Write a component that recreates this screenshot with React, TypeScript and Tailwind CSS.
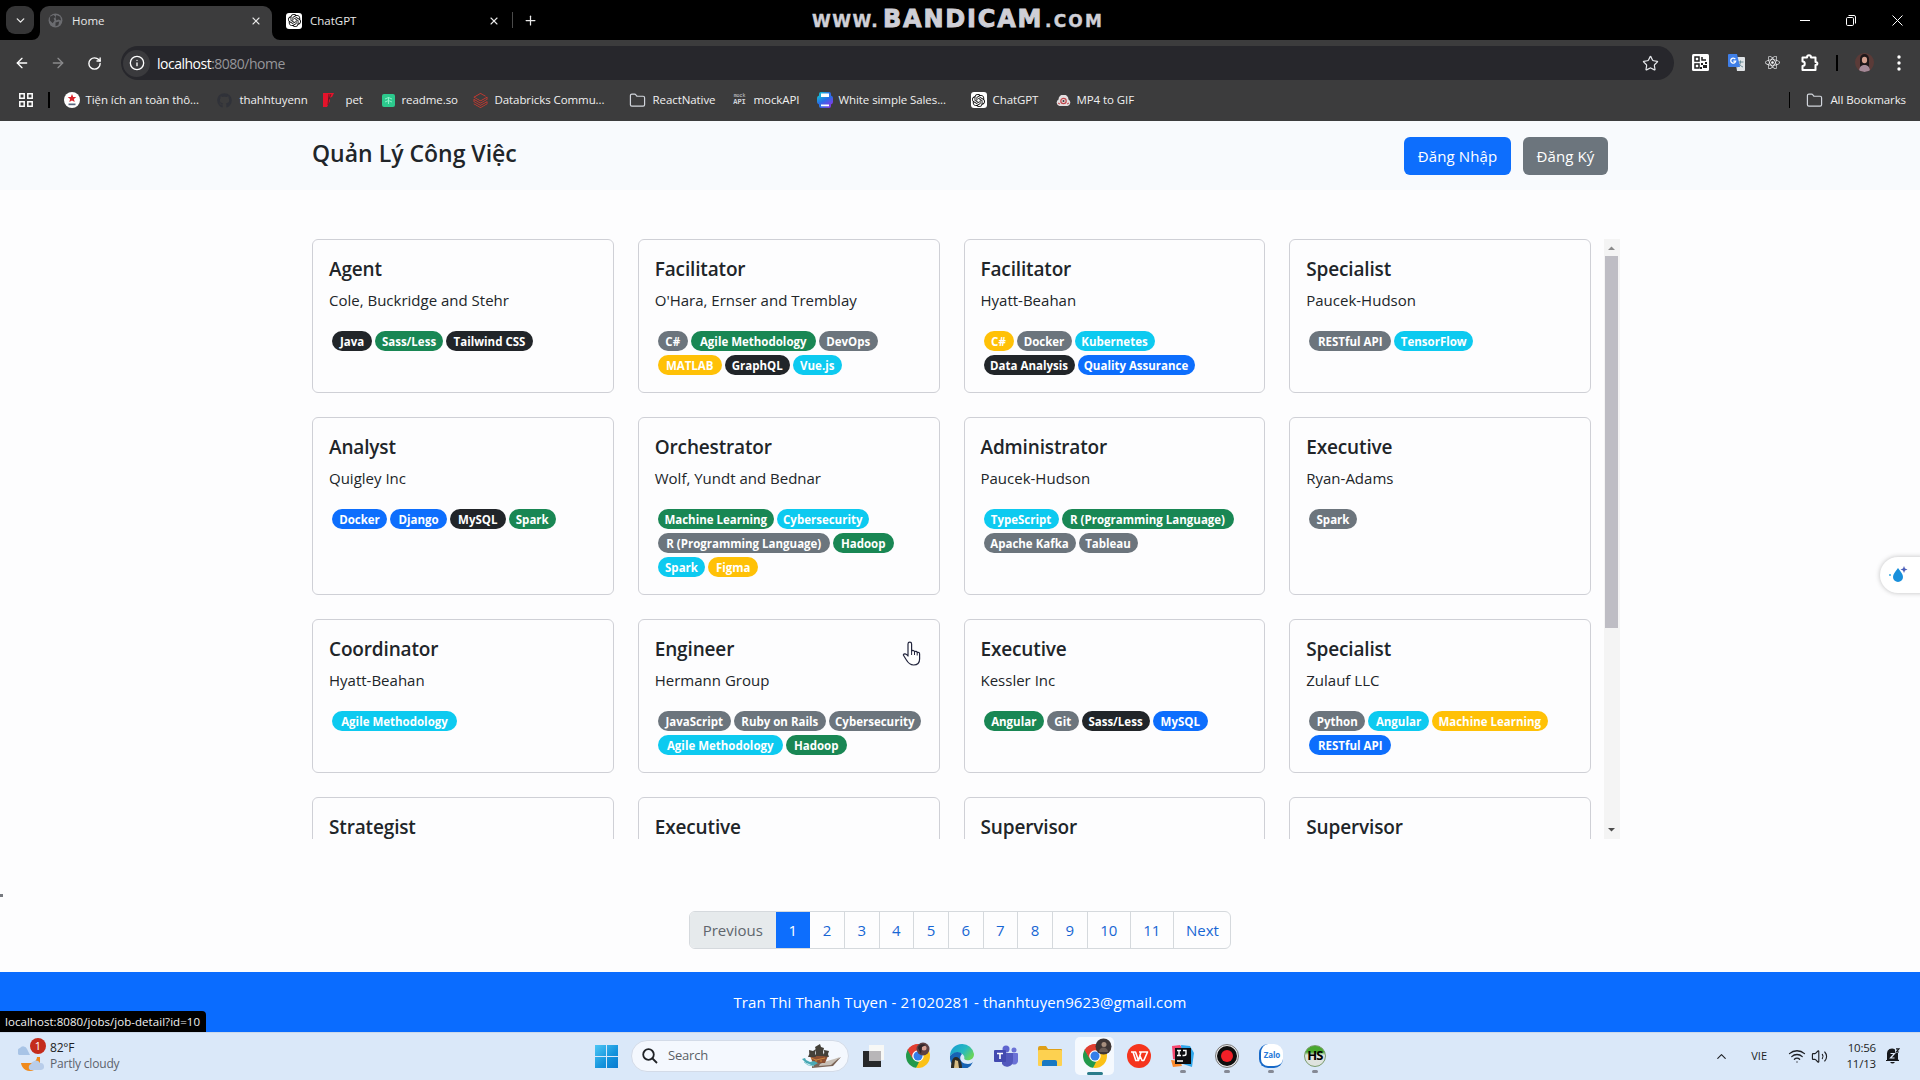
import type { ReactNode } from "react";
import { SiOpenai, SiDatabricks } from "react-icons/si";
import { FaGithub, FaReact } from "react-icons/fa";
import { ArrowLeft, ArrowRight, ChevronDown, ChevronUp, Folder, Info, RotateCw, Star, X, Plus, Wifi, Volume2 } from "lucide-react";

type Tone = "dark" | "green" | "gray" | "yellow" | "cyan" | "blue";
type Badge = [string, Tone];
type Job = { title: string; company: string; rows: Badge[][] };

const toneClass: Record<Tone, string> = {
  dark: "bg-[#212529]",
  green: "bg-[#198754]",
  gray: "bg-[#6c757d]",
  yellow: "bg-[#ffc107]",
  cyan: "bg-[#0dcaf0]",
  blue: "bg-[#0d6efd]",
};

const badgeWidth: Record<string, string> = {
  Java: "w-[40px]",
  "Sass/Less": "w-[68px]",
  "Tailwind CSS": "w-[87px]",
  "C#": "w-[30px]",
  "Agile Methodology": "w-[125px]",
  DevOps: "w-[59px]",
  MATLAB: "w-[64px]",
  GraphQL: "w-[65px]",
  "Vue.js": "w-[49px]",
  Docker: "w-[55px]",
  Kubernetes: "w-[80px]",
  "Data Analysis": "w-[91px]",
  "Quality Assurance": "w-[117px]",
  "RESTful API": "w-[82px]",
  TensorFlow: "w-[79px]",
  Django: "w-[57px]",
  MySQL: "w-[55.5px]",
  Spark: "w-[47.5px]",
  "Machine Learning": "w-[116px]",
  Cybersecurity: "w-[92px]",
  "R (Programming Language)": "w-[172px]",
  Hadoop: "w-[61px]",
  Figma: "w-[50px]",
  TypeScript: "w-[75px]",
  "Apache Kafka": "w-[92px]",
  Tableau: "w-[59px]",
  JavaScript: "w-[73px]",
  "Ruby on Rails": "w-[92px]",
  Angular: "w-[60.5px]",
  Git: "w-[31.5px]",
  Python: "w-[56px]",
};

const jobs: Job[] = [
  { title: "Agent", company: "Cole, Buckridge and Stehr", rows: [[["Java", "dark"], ["Sass/Less", "green"], ["Tailwind CSS", "dark"]]] },
  { title: "Facilitator", company: "O'Hara, Ernser and Tremblay", rows: [[["C#", "gray"], ["Agile Methodology", "green"], ["DevOps", "gray"]], [["MATLAB", "yellow"], ["GraphQL", "dark"], ["Vue.js", "cyan"]]] },
  { title: "Facilitator", company: "Hyatt-Beahan", rows: [[["C#", "yellow"], ["Docker", "gray"], ["Kubernetes", "cyan"]], [["Data Analysis", "dark"], ["Quality Assurance", "blue"]]] },
  { title: "Specialist", company: "Paucek-Hudson", rows: [[["RESTful API", "gray"], ["TensorFlow", "cyan"]]] },
  { title: "Analyst", company: "Quigley Inc", rows: [[["Docker", "blue"], ["Django", "blue"], ["MySQL", "dark"], ["Spark", "green"]]] },
  { title: "Orchestrator", company: "Wolf, Yundt and Bednar", rows: [[["Machine Learning", "green"], ["Cybersecurity", "cyan"]], [["R (Programming Language)", "gray"], ["Hadoop", "green"]], [["Spark", "cyan"], ["Figma", "yellow"]]] },
  { title: "Administrator", company: "Paucek-Hudson", rows: [[["TypeScript", "cyan"], ["R (Programming Language)", "green"]], [["Apache Kafka", "gray"], ["Tableau", "gray"]]] },
  { title: "Executive", company: "Ryan-Adams", rows: [[["Spark", "gray"]]] },
  { title: "Coordinator", company: "Hyatt-Beahan", rows: [[["Agile Methodology", "cyan"]]] },
  { title: "Engineer", company: "Hermann Group", rows: [[["JavaScript", "gray"], ["Ruby on Rails", "gray"], ["Cybersecurity", "gray"]], [["Agile Methodology", "cyan"], ["Hadoop", "green"]]] },
  { title: "Executive", company: "Kessler Inc", rows: [[["Angular", "green"], ["Git", "gray"], ["Sass/Less", "dark"], ["MySQL", "blue"]]] },
  { title: "Specialist", company: "Zulauf LLC", rows: [[["Python", "gray"], ["Angular", "cyan"], ["Machine Learning", "yellow"]], [["RESTful API", "blue"]]] },
  { title: "Strategist", company: "", rows: [] },
  { title: "Executive", company: "", rows: [] },
  { title: "Supervisor", company: "", rows: [] },
  { title: "Supervisor", company: "", rows: [] },
];

function Card({ job }: { job: Job }) {
  return (
    <article className="rounded-md border border-[#cfd0d6] px-4 pt-[17px] pb-[15px]">
      <h5 className="mb-[7px] text-[19px] font-semibold leading-6 tracking-[-0.15px]">{job.title}</h5>
      <p className="mb-4 h-6 text-[15px] leading-6 whitespace-nowrap">{job.company}</p>
      {job.rows.map((row, i) => (
        <div key={i} className="flex h-6 gap-[3px] pt-[3px] pl-[3px]">
          {row.map(([label, tone]) => (
            <span key={label} className={`flex h-5 shrink-0 items-center justify-center rounded-full pt-px text-[11.5px] font-bold whitespace-nowrap text-white ${badgeWidth[label]} ${toneClass[tone]}`}>
              {label}
            </span>
          ))}
        </div>
      ))}
    </article>
  );
}

function ChatIcon() {
  return (
    <span className="flex size-4 items-center justify-center rounded-[3px] bg-white text-black">
      <SiOpenai size={13} />
    </span>
  );
}

function Globe() {
  return (
    <svg width="15" height="15" viewBox="0 0 16 16">
      <circle cx="8" cy="8" r="7.4" fill="#6b6c70" />
      <path d="M2 4l4-2 2 2-2 2 1 2-2 3-3-3zM9 2l4 2 1 4-3-1-2 1-1-3zM8 10l4-1-1 4-3 1z" fill="#3a3a3c" />
    </svg>
  );
}

function VnIcon() {
  return (
    <svg width="16" height="16" viewBox="0 0 16 16">
      <circle cx="8" cy="8" r="8" fill="#fff" />
      <path d="M8 2l1.2 2.9 3.1.2-2.4 2 .8 3L8 8.500l-2.700 1.600.8-3-2.400-2 3.100-.2z" fill="#d8232a" />
      <path d="M4.500 11.500h7v1.700h-7z" fill="#56647c" />
    </svg>
  );
}

function PetIcon() {
  return (
    <svg width="11" height="14" viewBox="0 0 11 14">
      <path d="M0 0h11L9 4 6 5l1 3-3 6H0z" fill="#e5132b" />
      <path d="M6 1L5 12M8 1L6 6" stroke="#5a1a22" strokeWidth=".9" />
    </svg>
  );
}

function MockIcon() {
  return (
    <span className="flex w-3 flex-col items-center font-['Liberation_Mono'] text-[5px] leading-[5px] text-gray-300">
      <span>mock</span>
      <span className="text-[7px] font-bold leading-[7px]">API</span>
    </span>
  );
}

function SalesIcon() {
  return (
    <svg width="16" height="16" viewBox="0 0 16 16">
      <defs>
        <linearGradient id="sales" x1="0" y1="0" x2="1" y2="1">
          <stop offset="0" stopColor="#12c4d3" />
          <stop offset=".5" stopColor="#2a6de8" />
          <stop offset="1" stopColor="#8a35e6" />
        </linearGradient>
      </defs>
      <rect x="2" width="12" height="16" rx="2" fill="url(#sales)" />
      <rect y="3.500" width="16" height="9" rx="3" fill="url(#sales)" />
      <path d="M4 1.500h8V5H4zM4 12.500h8v1.800H4z" fill="#fff" />
    </svg>
  );
}

function GifIcon() {
  return (
    <svg width="15" height="11" viewBox="0 0 15 11">
      <path d="M3.500 11A3.500 3.500 0 0 1 2.500 4.500 5 5 0 0 1 12.500 4.500 3.500 3.500 0 0 1 11.500 11z" fill="#e3dedf" />
      <circle cx="7.500" cy="6" r="2.700" fill="none" stroke="#c0454b" strokeWidth="1.200" />
      <circle cx="7.500" cy="6" r="1" fill="#333" />
      <path d="M2 8l2 1M13 8l-2 1" stroke="#c0454b" />
    </svg>
  );
}

const bookmarks: { label: string; w: string; gap: string; icon: ReactNode }[] = [
  { label: "Tiện ích an toàn thô...", w: "w-[153px]", gap: "w-[22px]", icon: <VnIcon /> },
  { label: "thahhtuyenn", w: "w-[106px]", gap: "w-[23px]", icon: <FaGithub size={15} className="text-[#303239]" /> },
  { label: "pet", w: "w-[59px]", gap: "w-[23px]", icon: <PetIcon /> },
  {
    label: "readme.so", w: "w-[91px]", gap: "w-[20px]",
    icon: (
      <svg width="13" height="13" viewBox="0 0 13 13">
        <rect width="13" height="13" rx="2" fill="#2cc98d" />
        <path d="M3 5l3.500-1.500L10 5M3 8l3.500-1.500L10 8M6.500 3v7" stroke="#8df0c9" fill="none" />
      </svg>
    ),
  },
  { label: "Databricks Commu...", w: "w-[156px]", gap: "w-[22px]", icon: <SiDatabricks size={15} className="text-[#e0392e]" /> },
  { label: "ReactNative", w: "w-[105px]", gap: "w-[24px]", icon: <Folder size={17} strokeWidth={1.7} className="text-gray-300" /> },
  { label: "mockAPI", w: "w-[83px]", gap: "w-[20px]", icon: <MockIcon /> },
  { label: "White simple Sales...", w: "w-[154px]", gap: "w-[22px]", icon: <SalesIcon /> },
  { label: "ChatGPT", w: "w-[85px]", gap: "w-[22px]", icon: <ChatIcon /> },
  { label: "MP4 to GIF", w: "w-[90px]", gap: "w-[21px]", icon: <GifIcon /> },
];

function TabStrip() {
  return (
    <div className="relative flex h-10 items-end bg-black text-[12px] text-[#e8e8e8]">
      <div className="mb-1.5 ml-1.5 flex h-7 w-7 items-center justify-center rounded-[9px] bg-[#353536]">
        <ChevronDown size={13} strokeWidth={2.5} />
      </div>
      <div className="relative ml-1.5 flex h-[34px] w-[232px] items-center rounded-t-[9px] bg-[#3c3c3d] pr-[10px] pb-[5px] pl-2">
        <svg className="absolute bottom-0 -left-2" width="8" height="8"><path d="M8 0v8H0a8 8 0 0 0 8-8z" fill="#3c3c3d" /></svg>
        <svg className="absolute bottom-0 -right-2" width="8" height="8"><path d="M0 0v8h8a8 8 0 0 1-8-8z" fill="#3c3c3d" /></svg>
        <Globe />
        <span className="ml-[9px] grow pt-px text-[11.500px]">Home</span>
        <X size={12} strokeWidth={2.2} />
      </div>
      <div className="flex h-[34px] w-[240px] items-center pb-[5px] pl-3.5">
        <ChatIcon />
        <span className="ml-2 grow pt-px text-[11.500px]">ChatGPT</span>
        <X size={12} strokeWidth={2.2} className="mr-3" />
      </div>
      <div className="mb-3 h-4 w-px bg-[#4a4a4a]" />
      <Plus size={15} strokeWidth={2} className="mb-3 ml-[10px]" />
      <div className="grow" />
      <div className="flex h-10 w-[138px] items-center">
        <span className="flex w-[46px] justify-center"><svg width="10" height="10"><path d="M0 5.500h10" stroke="#fff" /></svg></span>
        <span className="flex w-[46px] justify-center">
          <svg width="10" height="11" fill="none" stroke="#fff"><rect x=".5" y="2.500" width="7" height="8" rx="1.200" /><path d="M2.500.5H8a1.500 1.500 0 0 1 1.500 1.500v6.500" /></svg>
        </span>
        <span className="flex w-[46px] justify-center"><svg width="11" height="11" stroke="#fff"><path d="M.5.5l10 10M10.500.5l-10 10" /></svg></span>
      </div>
      <div className="absolute top-0 left-[812px] flex h-[40px] items-baseline font-['DejaVu_Sans'] font-bold leading-[39px] text-[#cfcfd6]">
        <span className="w-[71px] text-[17px] tracking-[1.500px] [-webkit-text-stroke:0.4px_#cfcfd6]">WWW.</span>
        <span className="w-[162px] text-[24px] tracking-[1.800px] [-webkit-text-stroke:0.9px_#cfcfd6]">BANDICAM</span>
        <span className="text-[17px] tracking-[2.200px] [-webkit-text-stroke:0.4px_#cfcfd6]">.COM</span>
      </div>
    </div>
  );
}

function Toolbar() {
  return (
    <div className="flex h-[43px] items-center bg-[#3c3c3d] text-white">
      <div className="flex w-[121px] items-center pt-[3px] pl-[14px]">
        <ArrowLeft size={16} strokeWidth={2} />
        <ArrowRight size={16} strokeWidth={2} className="ml-[20px] text-[#8a8a8c]" />
        <RotateCw size={15} strokeWidth={2.2} className="ml-[21px]" />
      </div>
      <div className="mt-1.5 mb-[3px] flex h-[34px] w-[1553px] shrink-0 items-center rounded-full bg-[#27272c] pr-[15px] pl-[2px]">
        <span className="flex size-[27px] items-center justify-center rounded-full bg-[#3a3a3d]"><Info size={16} strokeWidth={2} /></span>
        <span className="ml-[7px] grow text-[14px] tracking-[-0.5px]">localhost<span className="text-[#96969a]">:8080/home</span></span>
        <Star size={17} strokeWidth={1.7} className="text-gray-200" />
      </div>
      <div className="flex grow items-center pt-0.5 pl-[17.500px]">
        <svg width="17" height="17" viewBox="0 0 17 17">
          <rect width="17" height="17" rx="1.500" fill="#fff" />
          <path d="M3 3h4v4H3zM10 3v3h4M3 10h4v4H3z" fill="none" stroke="#222" strokeWidth="1.500" />
          <path d="M9 9h2v2H9zM11 11h4v3h-4zM13 8h2v2h-2zM8 13h2v2H8z" fill="#222" />
        </svg>
        <svg className="ml-[19px]" width="17" height="17" viewBox="0 0 17 17">
          <path d="M7 3h9a1 1 0 0 1 1 1v12a1 1 0 0 1-1 1H9z" fill="#dfe3e6" />
          <path d="M9.500 8h6M12.500 6.500V8c0 2-1.500 4-3 5M11 9.500c1 2 2.500 3 4 3.500" stroke="#6b8c97" fill="none" />
          <path d="M1 0h8l3 13H1a1 1 0 0 1-1-1V1a1 1 0 0 1 1-1z" fill="#3f7fe8" />
          <path d="M7.300 5.200a2.500 2.500 0 1 0 .4 1.900H5.300" fill="none" stroke="#fff" strokeWidth="1.300" />
        </svg>
        <FaReact size={15} className="ml-[20px] text-gray-100" />
        <svg className="ml-[21px]" width="18" height="18" viewBox="0 0 18 18" fill="none" stroke="#fff" strokeWidth="2" strokeLinejoin="round">
          <path d="M1.500 3.500H6C6 .5 10 .5 10 3.500h4.500V8c2.500 0 2.500 3 0 3v5H1.500v-4c3 0 3-4.500 0-4.500z" />
        </svg>
        <span className="ml-[17px] h-4 w-0.5 bg-black" />
        <svg className="ml-[17px]" width="19" height="19" viewBox="0 0 19 19">
          <clipPath id="avatar"><circle cx="9.500" cy="9.500" r="9.500" /></clipPath>
          <g clipPath="url(#avatar)">
            <rect width="19" height="19" fill="#5b3b38" />
            <path d="M5 19V6a4.500 5 0 0 1 9 0v13z" fill="#1e1719" />
            <ellipse cx="9.500" cy="7" rx="2.600" ry="3.300" fill="#d3a08f" />
            <path d="M4 19c0-6 3-7 5.500-7s5.500 1 5.500 7z" fill="#a48997" />
          </g>
        </svg>
        <svg className="ml-[23px]" width="4" height="18" fill="#fff"><circle cx="2" cy="3" r="1.700" /><circle cx="2" cy="9" r="1.700" /><circle cx="2" cy="15" r="1.700" /></svg>
      </div>
    </div>
  );
}

function Bookmarks() {
  return (
    <div className="flex h-[38px] items-center bg-[#3c3c3d] pb-1 text-[11.500px] tracking-[-0.08px] text-[#f0f0f0]">
      <svg className="ml-[19px]" width="14" height="14" viewBox="0 0 14 14" fill="none" stroke="#fff" strokeWidth="1.500">
        <path d="M.8.8h4.400v4.400H.8zM8.800.8h4.400v4.400H8.800zM.8 8.800h4.400v4.400H.8zM8.800 8.800h4.400v4.400H8.800z" />
      </svg>
      <span className="mr-[14px] ml-[15px] h-4 w-[1.500px] bg-black" />
      {bookmarks.map((b) => (
        <div key={b.label} className={`flex shrink-0 items-center whitespace-nowrap ${b.w}`}>
          <span className={`flex shrink-0 ${b.gap}`}>{b.icon}</span>
          {b.label}
        </div>
      ))}
      <span className="grow" />
      <span className="mr-4 h-4 w-[1.500px] bg-black" />
      <Folder size={17} strokeWidth={1.7} className="text-gray-300" />
      <span className="mr-[14px] ml-[7px]">All Bookmarks</span>
    </div>
  );
}

const pages: [string, string][] = [
  ["2", "w-[35px]"], ["3", "w-[34.5px]"], ["4", "w-[34.5px]"], ["5", "w-[35px]"], ["6", "w-[34.5px]"],
  ["7", "w-[34.5px]"], ["8", "w-[35px]"], ["9", "w-[34.5px]"], ["10", "w-[43.5px]"], ["11", "w-[42.5px]"], ["Next", "w-[58px]"],
];

function ChromeLogo({ id }: { id: string }) {
  return (
    <svg width="24" height="24" viewBox="0 0 24 24">
      <clipPath id={id}><circle cx="12" cy="12" r="12" /></clipPath>
      <g clipPath={`url(#${id})`}>
        <path d="M12 12L-1 4V-2h27v9z" fill="#e13f31" />
        <path d="M12 6.500h13V26H10z" fill="#fbc117" />
        <path d="M1.600 5L7.200 14.800 13 18 9.500 25H-2V5z" fill="#23994b" />
        <path d="M1.600 6A12 12 0 0 1 22.400 6.500H12a5.500 5.500 0 0 0-5.500 5L6.800 15z" fill="#e13f31" />
      </g>
      <circle cx="12" cy="12" r="5.700" fill="#fff" />
      <circle cx="12" cy="12" r="4.500" fill="#347ee9" />
    </svg>
  );
}

function Slot({ children, running, active }: { children: ReactNode; running?: boolean; active?: boolean }) {
  return (
    <div className={`relative mx-[3px] flex h-[38px] w-[38.1px] shrink-0 items-center justify-center rounded-[5px] ${active ? "bg-[#f5f9fe]" : ""}`}>
      {children}
      {running && <span className="absolute bottom-0.5 h-[3px] w-1.5 rounded-full bg-[#858995]" />}
      {active && <span className="absolute bottom-0 h-[3px] w-4 rounded-full bg-[#2b7c8b]" />}
    </div>
  );
}

function Taskbar() {
  return (
    <div className="flex h-12 items-center border-t border-[#cbd8ea] bg-[#dae8f9] pb-px text-[#1d1f24]">
      <div className="flex w-[584px] items-center pl-[18px]">
        <div className="relative h-9 w-[32px]">
          <svg width="28" height="36" viewBox="0 0 28 36">
            <path d="M1 17a4 4 0 0 1 1-7 4 4 0 0 1 7 1l3 6z" fill="#a8c4e6" />
            <path d="M3 25h10a6 6 0 0 0 6-6h3v8l-6 5a9 9 0 0 1-13-7z" fill="#f08a1c" />
            <path d="M12 32a3.500 3.500 0 0 1 1-6 5 5 0 0 1 9-1 3.500 3.500 0 0 1 1 7z" fill="#b8cdea" />
          </svg>
          <span className="absolute top-0 left-3 flex h-4 w-4 items-center justify-center rounded-full bg-[#c42b1c] text-[11px] text-white">1</span>
        </div>
        <div className="text-[12px] leading-4 tracking-[-0.2px]">
          <div>82°F</div>
          <div className="text-[#5c626c]">Partly cloudy</div>
        </div>
      </div>
      <div className="flex w-[47px] justify-center pr-[3px]">
        <svg width="23" height="23" viewBox="0 0 23 23">
          <defs><linearGradient id="win" x1="0" y1="0" x2="1" y2="1"><stop offset="0" stopColor="#4cc6f5" /><stop offset=".6" stopColor="#1392dc" /><stop offset="1" stopColor="#0a7ad0" /></linearGradient></defs>
          <path d="M0 0h11v11H0zM12 0h11v11H12zM0 12h11v11H0zM12 12h11v11H12z" fill="url(#win)" />
        </svg>
      </div>
      <div className="mr-[3px] flex h-8 w-[218px] items-center rounded-full border border-[#d3dbe8] bg-[#f4f8fe] pr-1.5 pl-[10px]">
        <svg width="16" height="16" viewBox="0 0 16 16" fill="none" stroke="#1f2226" strokeWidth="1.800"><circle cx="6.500" cy="6.500" r="5.300" /><path d="M10.500 10.500l4.500 4.500" /></svg>
        <span className="ml-[10px] grow text-[13px] tracking-[-0.2px] text-[#5a5f66]">Search</span>
        <svg width="40" height="24" viewBox="0 0 40 24">
          <path d="M10 19h18l11-6-8 9-21 2z" fill="#7b6558" />
          <path d="M18 20c5-3 12-4 20-7l-9 8-12 1z" fill="#c8c0b7" />
          <path d="M8 12h18l-3 7H11z" fill="#8d5033" />
          <path d="M6 13q2-3 1-7l4 1 3-2-1 5 1 3zM13 12q2-4 0-9l5-3 1 3 3 1-1 4 1 4zM21 12q2-3 1-6l5 1-1 3 1 3z" fill="#444039" />
          <path d="M9 14l5 2 9-2M13 17h2M18 17h2" stroke="#d08a3e" strokeWidth="1" fill="none" />
          <path d="M0 15l3-1 1 2 4 2 4-1 4 2-5 3-4-2-3-1z" fill="#4aa9b5" />
          <path d="M2 18l4 3 6 1" stroke="#86cbd2" fill="none" />
        </svg>
      </div>
      <Slot>
        <svg width="24" height="24" viewBox="0 0 24 24"><path d="M7 1h15v15H7z" fill="#f7f8f6" /><path d="M1 7h18v16H1z" fill="#27282a" /><path d="M7 7h12v10H7z" fill="#b8b6b8" /></svg>
      </Slot>
      <Slot>
        <div className="relative">
          <ChromeLogo id="c1" />
          <svg className="absolute -top-0.5 right-0" width="14" height="14" viewBox="0 0 14 14"><circle cx="7" cy="7" r="6.500" fill="#5d4144" /><circle cx="8" cy="6" r="2.500" fill="#d6a195" /><path d="M2 6a5 4 0 0 1 8-3L6 5l-1 7z" fill="#30262b" /></svg>
        </div>
      </Slot>
      <Slot>
        <svg width="24" height="24" viewBox="0 0 24 24">
          <defs><linearGradient id="edge" x1="0" y1="0" x2="1" y2=".6"><stop offset="0" stopColor="#1599d6" /><stop offset=".6" stopColor="#26b9c0" /><stop offset="1" stopColor="#68d45b" /></linearGradient></defs>
          <path d="M0 12C0 5 5 0 12 0a12 12 0 0 1 12 10c0 5-4 7-8 6-3-1-1-2-2-4-2-4-9-5-14 0z" fill="url(#edge)" />
          <path d="M0 12c4-5 10-5 12-2-4 4-1 10 6 10 2 0 4-1 5-2A12 12 0 0 1 0 12z" fill="#1763b4" />
          <path d="M1 24c0-5 1-11 5-11s6 6 6 11z" fill="#2c2c26" /><path d="M4 24l1-8 3 1 1 7z" fill="#d7bc83" />
        </svg>
      </Slot>
      <Slot>
        <svg width="24" height="22" viewBox="0 0 24 22">
          <circle cx="12" cy="4" r="3.500" fill="#5d64cf" /><circle cx="20" cy="5" r="2.500" fill="#6b72d6" />
          <path d="M16 8h7a1 1 0 0 1 1 1v6a4 4 0 0 1-6 4z" fill="#6b72d6" />
          <path d="M8 8h11v8a6 6 0 0 1-11 3z" fill="#5258bd" />
          <rect y="5" width="12" height="12" rx="1" fill="#434ab0" /><path d="M3 8.500h6M6 8.500V14" stroke="#fff" strokeWidth="1.600" />
        </svg>
      </Slot>
      <Slot>
        <svg width="24" height="22" viewBox="0 0 24 22"><path d="M0 3a2 2 0 0 1 2-2h6l2 3h13a1 1 0 0 1 1 1v5H0z" fill="#dfa018" /><rect y="5" width="24" height="16" rx="1" fill="#fdd150" /><path d="M4 21v-4a2 2 0 0 1 2-2h11a2 2 0 0 1 2 2v4z" fill="#1878c3" /></svg>
      </Slot>
      <Slot active>
        <div className="relative">
          <ChromeLogo id="c2" />
          <svg className="absolute -top-1.5 -right-[5px]" width="17" height="17" viewBox="0 0 17 17"><circle cx="8.500" cy="8.500" r="8" fill="#3f3635" /><circle cx="9" cy="6.500" r="2.500" fill="#a88f7e" /><path d="M4 14c0-6 9-6 9 0z" fill="#6a5c56" /></svg>
        </div>
      </Slot>
      <Slot>
        <svg width="24" height="24" viewBox="0 0 24 24" fill="none"><circle cx="12" cy="12" r="12" fill="#f5351e" /><path d="M4 8h4.500l3 8.500L14 8h2.500M6 8l2.800 8.500h2.700L13 12l2 4.500h1.800L20.500 8H12" stroke="#fff" strokeWidth="1.600" strokeLinejoin="round" /></svg>
      </Slot>
      <Slot running>
        <svg width="24" height="24" viewBox="0 0 24 24">
          <path d="M1 2l8-1 3 4-1 12-9-2z" fill="#f6486f" /><path d="M10 1l9 1 4 7-2 14-9-3z" fill="#2fa6ea" /><path d="M0 16l9 1 2 5-9 1z" fill="#fc8a2d" />
          <path d="M4 4h16v16H4z" fill="#0d0d10" /><path d="M6 6.500h4M8 6.500v5M6 11.500h4M12 6.500h3v3.500q0 1.500-2 1.500h-1.500M6 17h6" stroke="#fff" strokeWidth="1.400" fill="none" />
        </svg>
      </Slot>
      <Slot running>
        <svg width="24" height="24" viewBox="0 0 24 24"><circle cx="12" cy="12" r="11.500" fill="#e9e9ea" stroke="#777" /><circle cx="12" cy="12" r="10" fill="#0e0e0e" /><circle cx="12" cy="12" r="6" fill="#f11f27" /></svg>
      </Slot>
      <Slot running>
        <div className="flex size-6 items-center justify-center rounded-[9px] border-b-2 border-l-2 border-[#1769c8] bg-white text-[8px] font-bold tracking-[-0.2px] text-[#2779d8]">Zalo</div>
      </Slot>
      <Slot running>
        <div className="flex size-[22px] items-center justify-center rounded-full border border-[#7b9c6d] bg-gradient-to-b from-[#48a82e] from-30% to-[#dfe3df] to-45% text-[13px] font-bold tracking-[-0.8px] text-black">HS</div>
      </Slot>
      <div className="flex grow items-center justify-end pr-[20px]">
        <ChevronUp size={15} strokeWidth={1.8} />
        <span className="ml-[22px] text-[11px]">VIE</span>
        <Wifi size={18} strokeWidth={1.7} className="ml-[21px]" />
        <Volume2 size={17} strokeWidth={1.6} className="ml-[5px]" />
        <div className="mr-px ml-[17px] w-[31px] text-right text-[11.500px] leading-4 tracking-[-0.2px]"><div>10:56</div><div>11/13</div></div>
        <svg className="ml-[9px]" width="14" height="16" viewBox="0 0 14 16">
          <path d="M1 12V6a5 5 0 0 1 8-4.500V5h3v6.500l1 .5v1H0v-1z" fill="#16181c" /><path d="M4 14h5q-2.500 3-5 0z" fill="#16181c" />
          <path d="M10 .8h3L10.300 4H13" stroke="#16181c" fill="none" strokeWidth="1.200" /><path d="M4.500 5.500h4l-4 4.500h4" stroke="#dce8f8" fill="none" strokeWidth="1.200" />
        </svg>
      </div>
    </div>
  );
}

export default function App() {
  return (
    <div className="relative flex h-[1080px] w-[1920px] flex-col overflow-hidden bg-[#fdfdfe] font-['Open_Sans','Noto_Sans',sans-serif] text-[#212529]">
      <TabStrip />
      <Toolbar />
      <Bookmarks />
      <header className="h-[69px] bg-[#f8fafd]">
        <div className="mx-auto flex w-[1296px] pt-4">
          <h1 className="grow text-[23px] font-semibold leading-[33px]">Quản Lý Công Việc</h1>
          <button className="h-[38px] w-[107px] rounded-md bg-[#0d6efd] text-[15px] tracking-[0.1px] text-white">Đăng Nhập</button>
          <button className="ml-3 h-[38px] w-[85px] rounded-md bg-[#6c757d] text-[15px] tracking-[0.1px] text-white">Đăng Ký</button>
        </div>
      </header>
      <main className="h-[782px]">
        <div className="mt-[49px] ml-[312px] flex h-[600px] w-[1308px] overflow-hidden">
          <div className="grid h-[712px] w-[1279px] shrink-0 grid-cols-4 grid-rows-[154px_178px_154px_154px] gap-6">
            {jobs.map((job, i) => <Card key={i} job={job} />)}
          </div>
          <div className="ml-[13px] flex w-4 shrink-0 flex-col items-center bg-[#f4f4f4]">
            <svg width="16" height="17"><path d="M4 11h7L7.500 7.500z" fill="#8a8a8a" /></svg>
            <div className="mr-[2px] h-[372px] w-[13px] bg-[#bebdc4]" />
            <div className="grow" />
            <svg width="16" height="17"><path d="M4 6h7L7.500 9.500z" fill="#4c4c4c" /></svg>
          </div>
        </div>
        <nav className="mx-auto mt-[72px] flex h-[38px] w-[542px] overflow-hidden rounded-md border border-[#d5d9dd] text-[15px] text-[#1766d4]">
          <span className="flex w-[85.5px] shrink-0 items-center justify-center bg-[#e6eaec] text-[#5f666d]">Previous</span>
          <span className="-my-px flex w-[34.5px] shrink-0 items-center justify-center bg-[#0d6efd] text-white">1</span>
          {pages.map(([label, w]) => (
            <span key={label} className={`flex shrink-0 items-center justify-center border-r border-[#d5d9dd] last:border-r-0 ${w}`}>{label}</span>
          ))}
        </nav>
      </main>
      <footer className="flex h-[60px] items-center justify-center bg-[#0a6cff] text-[15px] tracking-[0.12px] text-white">
        <span>Tran Thi Thanh Tuyen - 21020281 - thanhtuyen9623@gmail.com</span>
      </footer>
      <Taskbar />
      <div className="absolute top-[1011px] left-0 flex h-[21px] w-[206px] items-center rounded-tr bg-black pl-[5px] text-[11.500px] tracking-[0.05px] text-[#f2f2f2]">localhost:8080/jobs/job-detail?id=10</div>
      <span className="absolute top-[894px] left-0 h-[3px] w-[3px] bg-[#777a80]" />
      <div className="absolute top-[557px] left-[1880px] flex h-[36px] w-[44px] items-center rounded-l-full bg-white pl-[7px] shadow-[0_0_5px_rgba(0,0,0,0.25)]">
        <svg width="22" height="22" viewBox="0 0 22 22"><path d="M11 4c3 4 5 6 5 9a5 5 0 0 1-10 0c0-3 2-5 5-9z" fill="#188fdb" /><path d="M17 2l1 2.500 2.500 1-2.500 1-1 2.500-1-2.500-2.500-1 2.500-1z" fill="#4b5db8" /><circle cx="3" cy="11" r="1" fill="#35a9e0" /></svg>
      </div>
      <svg className="absolute top-[641px] left-[902px]" width="19" height="25" viewBox="0 0 19 25">
        <path d="M6 14V3a1.800 1.800 0 0 1 3.600 0v7a1.700 1.700 0 0 1 2.900.8 1.600 1.600 0 0 1 2.700.8 1.500 1.500 0 0 1 2.400 1.300V18c0 4-2.500 6-6 6-4 0-5.500-2-7.500-5.500L1.300 14C2 12.300 4 12.500 6 15z" fill="#fff" stroke="#22253d" strokeWidth="1.200" strokeLinejoin="round" />
        <path d="M9.600 9.500V14M12.500 11v3M15.200 12v2.500" stroke="#22253d" strokeWidth="1" />
      </svg>
    </div>
  );
}
